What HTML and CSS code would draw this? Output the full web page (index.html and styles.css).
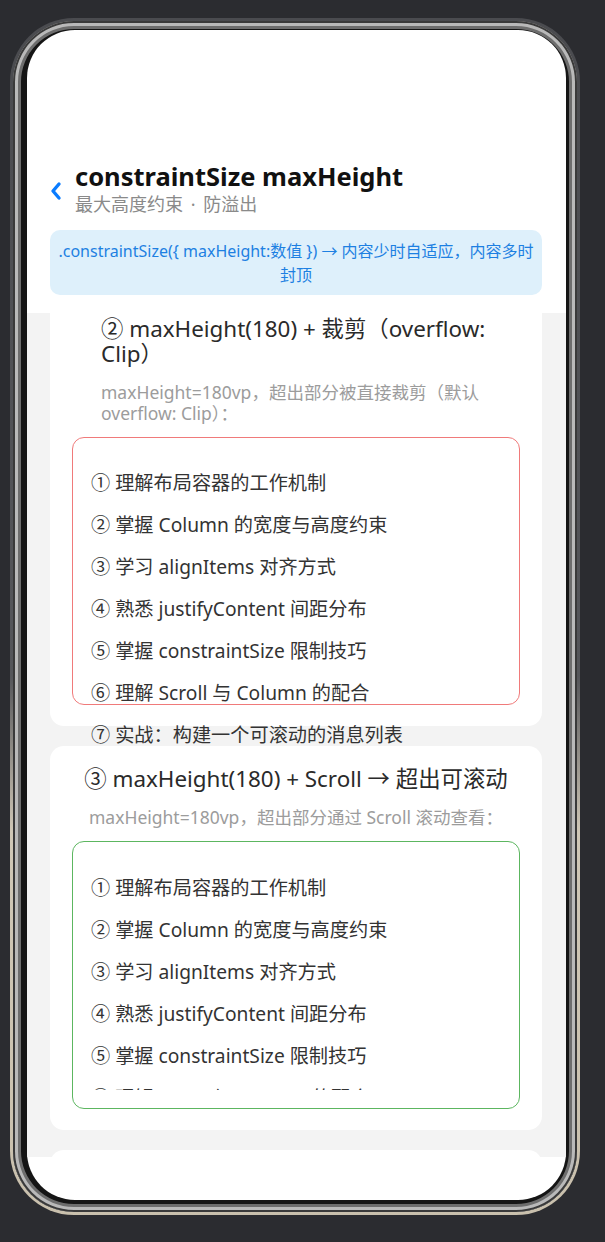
FILE: index.html
```html
<!DOCTYPE html>
<html lang="zh-CN">
<head>
    <meta charset="UTF-8">
    <meta name="viewport" content="width=device-width, initial-scale=1.0">
    <title>constraintSize maxHeight</title>
    <link rel="stylesheet" href="styles.css">
</head>
<body>

    <div class="device">
        <div class="bezel">
            <div class="screen">

                <!-- Header -->
                <div class="header">
                    <svg class="back" width="14" height="20" viewBox="0 0 14 20">
                        <polyline points="10,3 4,10 10,17" fill="none" stroke="#0a7cff" stroke-width="3.4" stroke-linecap="round" stroke-linejoin="round"/>
                    </svg>
                    <div class="header-text">
                        <div class="title">constraintSize maxHeight</div>
                        <div class="subtitle">最大高度约束 · 防溢出</div>
                    </div>
                </div>

                <div class="tip">.constraintSize({ maxHeight:数值 }) → 内容少时自适应，内容多时封顶</div>

                <!-- Scroll area -->
                <div class="scroll">
                    <div class="list">

                        <div class="card">
                            <div class="card-head narrow">
                                <div class="card-title">② maxHeight(180) + 裁剪（overflow: Clip）</div>
                                <div class="card-desc">maxHeight=180vp，超出部分被直接裁剪（默认 overflow: Clip）：</div>
                            </div>
                            <div class="box red">
                                <div class="item">① 理解布局容器的工作机制</div>
                                <div class="item">② 掌握 Column 的宽度与高度约束</div>
                                <div class="item">③ 学习 alignItems 对齐方式</div>
                                <div class="item">④ 熟悉 justifyContent 间距分布</div>
                                <div class="item">⑤ 掌握 constraintSize 限制技巧</div>
                                <div class="item">⑥ 理解 Scroll 与 Column 的配合</div>
                                <div class="item">⑦ 实战：构建一个可滚动的消息列表</div>
                            </div>
                        </div>

                        <div class="card">
                            <div class="card-head">
                                <div class="card-title">③ maxHeight(180) + Scroll → 超出可滚动</div>
                                <div class="card-desc">maxHeight=180vp，超出部分通过 Scroll 滚动查看：</div>
                            </div>
                            <div class="box green">
                                <div class="box-scroll">
                                    <div class="item">① 理解布局容器的工作机制</div>
                                    <div class="item">② 掌握 Column 的宽度与高度约束</div>
                                    <div class="item">③ 学习 alignItems 对齐方式</div>
                                    <div class="item">④ 熟悉 justifyContent 间距分布</div>
                                    <div class="item">⑤ 掌握 constraintSize 限制技巧</div>
                                    <div class="item">⑥ 理解 Scroll 与 Column 的配合</div>
                                    <div class="item">⑦ 实战：构建一个可滚动的消息列表</div>
                                </div>
                            </div>
                        </div>

                        <div class="card empty"></div>

                    </div>
                </div>

                <div class="bottom-space"></div>
            </div>
        </div>
    </div>

</body>
</html>
```

FILE: styles.css
```css
body {
    margin: 0;
    padding: 0;
    background-color: #2b2c30;
    font-family: "Noto Sans", "Noto Sans CJK SC", sans-serif;
}

/* Phone frame */
.device {
    width: 570px;
    height: 1197px;
    margin: 18px 0 0 10px;
    padding: 3px;
    box-sizing: border-box;
    border-radius: 64px;
    background: linear-gradient(180deg, #4a4b4f 0%, #55565a 55%, #cfc7b6 68%, #c9c0ad 100%);
}

.bezel {
    height: 100%;
    box-sizing: border-box;
    padding: 9px 11px 12px 14px;
    border-radius: 61px;
    background-color: #151515;
    box-shadow: inset 0 0 0 2px #3a3a3a, inset 0 0 0 5px #b9b9b9, inset 0 0 0 8px #6d6d6d;
}

.screen {
    height: 100%;
    border-radius: 48px;
    background-color: #fff;
    overflow: hidden;
    display: flex;
    flex-direction: column;
}

/* Header */
.header {
    display: flex;
    align-items: center;
    padding: 130px 0 0 22px;
}

.back {
    margin-right: 12px;
    margin-top: 6px;
}

.title {
    font-size: 25.5px;
    font-weight: bold;
    line-height: 32px;
    color: #111;
}

.subtitle {
    font-size: 18px;
    line-height: 24px;
    color: #8a8a8a;
    word-spacing: 3px;
}

.tip {
    margin: 14px 24px 0 23px;
    padding: 9px 4px 8px;
    border-radius: 10px;
    background-color: #def0fb;
    color: #1d80e2;
    font-size: 16px;
    line-height: 24px;
    text-align: center;
}

/* Scroll area */
.scroll {
    flex: 1;
    margin-top: 18px;
    padding: 0 24px 0 23px;
    background-color: #f3f3f3;
    overflow: hidden;
}

.list {
    margin-top: -17px;
    display: flex;
    flex-direction: column;
    gap: 20px;
}

.card {
    background-color: #fff;
    border-radius: 14px;
    padding: 20px 22px 21px;
}

.card.empty {
    height: 200px;
}

.card-head {
    text-align: center;
}

.card-head.narrow {
    width: 400px;
    margin-left: 29px;
    text-align: left;
}

.card-title {
    font-size: 22.4px;
    line-height: 25px;
    color: #2a2a2a;
}

.card-desc {
    margin-top: 16px;
    font-size: 17.5px;
    line-height: 21px;
    color: #9c9c9c;
}

.box {
    margin-top: 13px;
    height: 268px;
    box-sizing: border-box;
    border: 1px solid #f07a7a;
    border-radius: 12px;
}

.box.red {
    padding: 24px 18px 0;
}

.box.green {
    border-color: #5cb660;
    padding: 18px;
}

.box-scroll {
    height: 100%;
    padding-top: 7px;
    box-sizing: border-box;
    overflow: hidden;
}

.item {
    height: 42px;
    line-height: 42px;
    font-size: 19.2px;
    color: #333;
    white-space: nowrap;
}

.bottom-space {
    height: 43px;
}
```
